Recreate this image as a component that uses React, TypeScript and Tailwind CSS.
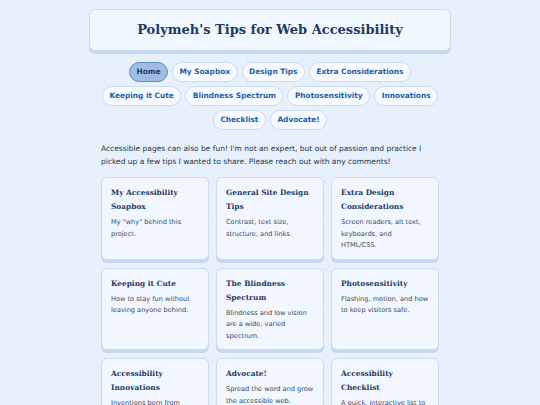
const navRows = [
  ["Home", "My Soapbox", "Design Tips", "Extra Considerations"],
  ["Keeping it Cute", "Blindness Spectrum", "Photosensitivity", "Innovations"],
  ["Checklist", "Advocate!"],
];

const cards = [
  { title: "My Accessibility Soapbox", desc: 'My "why" behind this project.' },
  { title: "General Site Design Tips", desc: "Contrast, text size, structure, and links." },
  { title: "Extra Design Considerations", desc: "Screen readers, alt text, keyboards, and HTML/CSS." },
  { title: "Keeping it Cute", desc: "How to stay fun without leaving anyone behind." },
  { title: "The Blindness Spectrum", desc: "Blindness and low vision are a wide, varied spectrum." },
  { title: "Photosensitivity", desc: "Flashing, motion, and how to keep visitors safe." },
  { title: "Accessibility Innovations", desc: "Inventions born from accessibility needs." },
  { title: "Advocate!", desc: "Spread the word and grow the accessible web." },
  { title: "Accessibility Checklist", desc: "A quick, interactive list to check your site." },
];

function NavPill({ label }: { label: string }) {
  const active = label === "Home";
  return (
    <a
      href="#"
      className={
        active
          ? "flex h-[20px] items-center rounded-full border border-[#5f8cc4] bg-[#9dbde6] px-[6.5px] text-[7.4px] font-bold text-[#1e3a5f]"
          : "flex h-[20px] items-center rounded-full border border-[#cadcf0] bg-[#f6faff] px-[6.5px] text-[7.4px] font-bold text-[#1f5ea6]"
      }
    >
      {label}
    </a>
  );
}

export default function App() {
  return (
    <div className="min-h-screen bg-[#e7f0fb] bg-[radial-gradient(circle,#cad9ea_0.8px,transparent_1px)] bg-[length:11px_11px] font-['DejaVu_Sans',Verdana,sans-serif]">
      <div className="mx-auto w-[362px] pt-[9px]">
        {/* Title */}
        <header className="flex h-[42px] items-center justify-center rounded-[6px] border border-[#c9dcf1] bg-[#f1f7ff] shadow-[0_3px_0_#c6d9ef]">
          <h1 className="font-['DejaVu_Serif',Georgia,serif] text-[13px] font-bold text-[#1e3a5f]">
            Polymeh's Tips for Web Accessibility
          </h1>
        </header>

        {/* Nav */}
        <nav className="mt-[11px] flex flex-col items-center gap-[4px]">
          {navRows.map((row, i) => (
            <div key={i} className="flex gap-[4px]">
              {row.map((label) => (
                <NavPill key={label} label={label} />
              ))}
            </div>
          ))}
        </nav>

        <main className="px-[12px]">
          <p className="mt-[12px] text-[7.5px] leading-[13px] text-[#24364d]">
            Accessible pages can also be fun! I'm not an expert, but out of passion and practice I picked up a few tips I wanted to share. Please reach out with any comments!
          </p>

          <div className="mt-[9px] grid grid-cols-3 gap-x-[7px] gap-y-[8px] pb-[10px]">
            {cards.map((c) => (
              <div
                key={c.title}
                className="rounded-[6px] border border-[#c9dcf1] bg-[#f2f7ff] px-[9px] pt-[8px] pb-[7px] shadow-[0_3px_0_#c6d9ef]"
              >
                <h2 className="font-['DejaVu_Serif',Georgia,serif] text-[7.4px] font-bold leading-[14px] text-[#1e3a5f]">
                  {c.title}
                </h2>
                <p className="mt-[3px] text-[6.6px] leading-[11.5px] text-[#3b4a5c]">{c.desc}</p>
              </div>
            ))}
          </div>
        </main>
      </div>
    </div>
  );
}
